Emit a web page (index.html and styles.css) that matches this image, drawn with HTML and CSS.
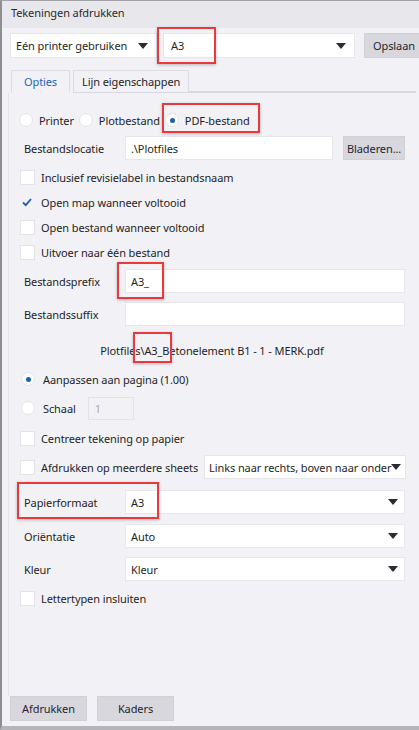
FILE: index.html
```html
<!DOCTYPE html>
<html>
<head>
<meta charset="utf-8">
<link rel="stylesheet" href="styles.css">
</head>
<body>
<div class="window">
  <div class="titlebar">Tekeningen afdrukken</div>
  <div class="toolbar">
    <div class="combo combo-printer"><span>Eén printer gebruiken</span><i class="arrow"></i></div>
    <div class="combo combo-format"><span>A3</span><i class="arrow"></i></div>
    <div class="btn btn-save">Opslaan</div>
  </div>
  <div class="tabs">
    <div class="tab active">Opties</div>
    <div class="tab">Lijn eigenschappen</div>
    <div class="tab-fill"></div>
  </div>
  <div class="panel">
    <div class="row radios">
      <label class="radio"><i class="rb"></i>Printer</label>
      <label class="radio"><i class="rb"></i>Plotbestand</label>
      <label class="radio"><i class="rb on"></i>PDF-bestand</label>
    </div>
    <div class="row field mt3">
      <span class="lbl">Bestandslocatie</span>
      <div class="input loc">.\Plotfiles</div>
      <div class="btn btn-browse">Bladeren...</div>
    </div>
    <div class="row check mt5"><i class="cb"></i>Inclusief revisielabel in bestandsnaam</div>
    <div class="row check mt1"><i class="cb checked"><svg viewBox="0 0 14 14" width="14" height="14"><path d="M3 7.5 L5.8 10.2 L11 4" fill="none" stroke="#1c5fae" stroke-width="1.8"/></svg></i>Open map wanneer voltooid</div>
    <div class="row check mt1"><i class="cb"></i>Open bestand wanneer voltooid</div>
    <div class="row check mt1"><i class="cb"></i>Uitvoer naar één bestand</div>
    <div class="row field mt5">
      <span class="lbl">Bestandsprefix</span>
      <div class="input grow">A3_</div>
    </div>
    <div class="row field mt9">
      <span class="lbl">Bestandssuffix</span>
      <div class="input grow"></div>
    </div>
    <div class="row filename mt12">Plotfiles\A3_Betonelement B1 - 1 - MERK.pdf</div>
    <div class="row radio-row mt5"><i class="rb on"></i>Aanpassen aan pagina (1.00)</div>
    <div class="row radio-row mt5"><i class="rb"></i>Schaal<div class="input scale">1</div></div>
    <div class="row check mt6"><i class="cb"></i>Centreer tekening op papier</div>
    <div class="row check mt5"><i class="cb"></i><span class="nowrap">Afdrukken op meerdere sheets</span><div class="combo sheets"><span>Links naar rechts, boven naar onder</span><i class="arrow"></i></div></div>
    <div class="row field mt11">
      <span class="lbl">Papierformaat</span>
      <div class="combo grow"><span>A3</span><i class="arrow"></i></div>
    </div>
    <div class="row field mt10">
      <span class="lbl">Oriëntatie</span>
      <div class="combo grow"><span>Auto</span><i class="arrow"></i></div>
    </div>
    <div class="row field mt9">
      <span class="lbl">Kleur</span>
      <div class="combo grow"><span>Kleur</span><i class="arrow"></i></div>
    </div>
    <div class="row check mt5"><i class="cb"></i>Lettertypen insluiten</div>
  </div>
  <div class="footer">
    <div class="btn btn-foot">Afdrukken</div>
    <div class="btn btn-foot">Kaders</div>
  </div>

  <div class="mark mark-a3"></div>
  <div class="mark mark-pdf"></div>
  <div class="mark mark-prefix"></div>
  <div class="mark mark-file"></div>
  <div class="mark mark-paper"></div>
</div>
</body>
</html>
```
FILE: styles.css
```css
* { box-sizing: border-box; }
html, body { margin: 0; padding: 0; }
body {
  width: 419px;
  height: 730px;
  overflow: hidden;
  background: #f2f1f6;
  font-family: "Noto Sans", "Open Sans", sans-serif;
  font-size: 11px;
  letter-spacing: -0.1px;
  color: #1f1f24;
}
.window {
  position: relative;
  width: 419px;
  height: 730px;
  overflow: hidden;
  background: #f2f1f6;
  border-left: 2px solid #8e8e93;
  border-top: 1px solid #a2a2a8;
  border-bottom: 4px solid #b4b4ba;
  display: flex;
  flex-direction: column;
}
.titlebar {
  height: 27px;
  line-height: 23px;
  padding-left: 9px;
  background: #e8e7ec;
  color: #2a2a2e;
  flex: none;
}
.toolbar {
  display: flex;
  align-items: center;
  height: 25px;
  margin-top: 5px;
  padding-left: 8px;
  flex: none;
}
.combo {
  display: flex;
  align-items: center;
  justify-content: space-between;
  height: 24px;
  background: #fff;
  border: 1px solid #e6e6eb;
  padding: 0 6px 0 5px;
  white-space: nowrap;
}
.arrow {
  width: 0;
  height: 0;
  border-left: 5px solid transparent;
  border-right: 5px solid transparent;
  border-top: 6px solid #2b2b33;
  flex: none;
}
.combo-printer { width: 147px; height: 25px; flex: none; padding-right: 8px; }
.combo-format { width: 192px; height: 25px; margin-left: 6px; padding-left: 7px; padding-right: 8px; flex: none; }
.btn {
  display: flex;
  align-items: center;
  justify-content: center;
  background: #d7d7dd;
  border: 1px solid #d0d0d6;
  color: #26262c;
  white-space: nowrap;
}
.btn-save { width: 60px; height: 25px; margin-left: 9px; flex: none; }
.tabs {
  display: flex;
  align-items: flex-end;
  height: 23px;
  margin-top: 12px;
  padding-left: 9px;
  flex: none;
}
.tab {
  height: 23px;
  line-height: 21px;
  padding: 0 11px;
  border: 1px solid #dcdce2;
  border-bottom: 1px solid #d8d8de;
  color: #24242a;
  background: #f2f1f6;
}
.tab + .tab { margin-left: 3px; padding: 0 8px; }
.tab.active {
  color: #1f63b8;
  border-bottom-color: #f2f1f6;
  padding: 0 12px;
}
.tab-fill {
  flex: 1;
  margin-right: 3px;
  border-bottom: 2px solid #d8d8de;
  height: 1px;
}
.panel {
  flex: 1;
  display: flex;
  flex-direction: column;
  margin-left: 6px;
  padding: 14px 14px 0 10px;
  border-left: 1px solid #e4e4ea;
}
.row {
  display: flex;
  align-items: center;
  height: 24px;
  flex: none;
  white-space: nowrap;
}
.radios { height: 26px; }
.radio { display: flex; align-items: center; margin-right: 5px; }
.rb {
  display: inline-block;
  width: 14px;
  height: 14px;
  border-radius: 50%;
  background: #fff;
  border: 1px solid #e2e2e8;
  margin-right: 6px;
  position: relative;
  flex: none;
}
.rb.on::after {
  content: "";
  position: absolute;
  left: 4px;
  top: 4px;
  width: 5px;
  height: 5px;
  border-radius: 50%;
  background: #1c5fae;
}
.field .lbl { width: 106px; padding-left: 5px; flex: none; }
.input {
  height: 24px;
  background: #fff;
  border: 1px solid #e6e6eb;
  display: flex;
  align-items: center;
  padding-left: 5px;
}
.loc { width: 209px; }
.grow { flex: 1; }
.btn-browse { width: 62px; height: 24px; margin-left: 10px; }
.check { padding-left: 1px; }
.cb {
  display: inline-block;
  width: 15px;
  height: 15px;
  background: #fff;
  border: 1px solid #e2e2e8;
  margin-right: 6px;
  flex: none;
}
.cb.checked { background: transparent; border-color: transparent; }
.cb svg { display: block; margin: -1px; }
.nowrap { white-space: nowrap; flex: none; }
.filename { justify-content: center; padding-left: 0; }
.radio-row { padding-left: 2px; }
.radio-row .rb { margin-right: 8px; }
.scale {
  width: 46px;
  height: 23px;
  margin-left: 12px;
  color: #a8a8ae;
  background: #f2f1f6;
  border-color: #e2e2e8;
  padding-left: 6px;
}
.sheets { flex: 1; margin-left: 6px; padding-left: 4px; padding-right: 4px; }
.mt1 { margin-top: 1px; }
.mt3 { margin-top: 3px; }
.mt5 { margin-top: 5px; }
.mt6 { margin-top: 6px; }
.mt9 { margin-top: 9px; }
.mt10 { margin-top: 10px; }
.mt11 { margin-top: 11px; }
.mt12 { margin-top: 12px; }
.footer {
  display: flex;
  gap: 10px;
  padding: 0 0 5px 8px;
  flex: none;
}
.btn-foot { width: 77px; height: 25px; }
.mark {
  position: absolute;
  border: 2px solid #e8393d;
  box-shadow: 0 1px 3px rgba(0,0,0,0.25);
  pointer-events: none;
}
.mark-a3 { left: 155px; top: 26px; width: 59px; height: 37px; }
.mark-pdf { left: 160px; top: 102px; width: 98px; height: 30px; }
.mark-prefix { left: 115px; top: 261px; width: 47px; height: 37px; }
.mark-file { left: 131px; top: 331px; width: 39px; height: 31px; }
.mark-paper { left: 15px; top: 481px; width: 142px; height: 37px; }
```
